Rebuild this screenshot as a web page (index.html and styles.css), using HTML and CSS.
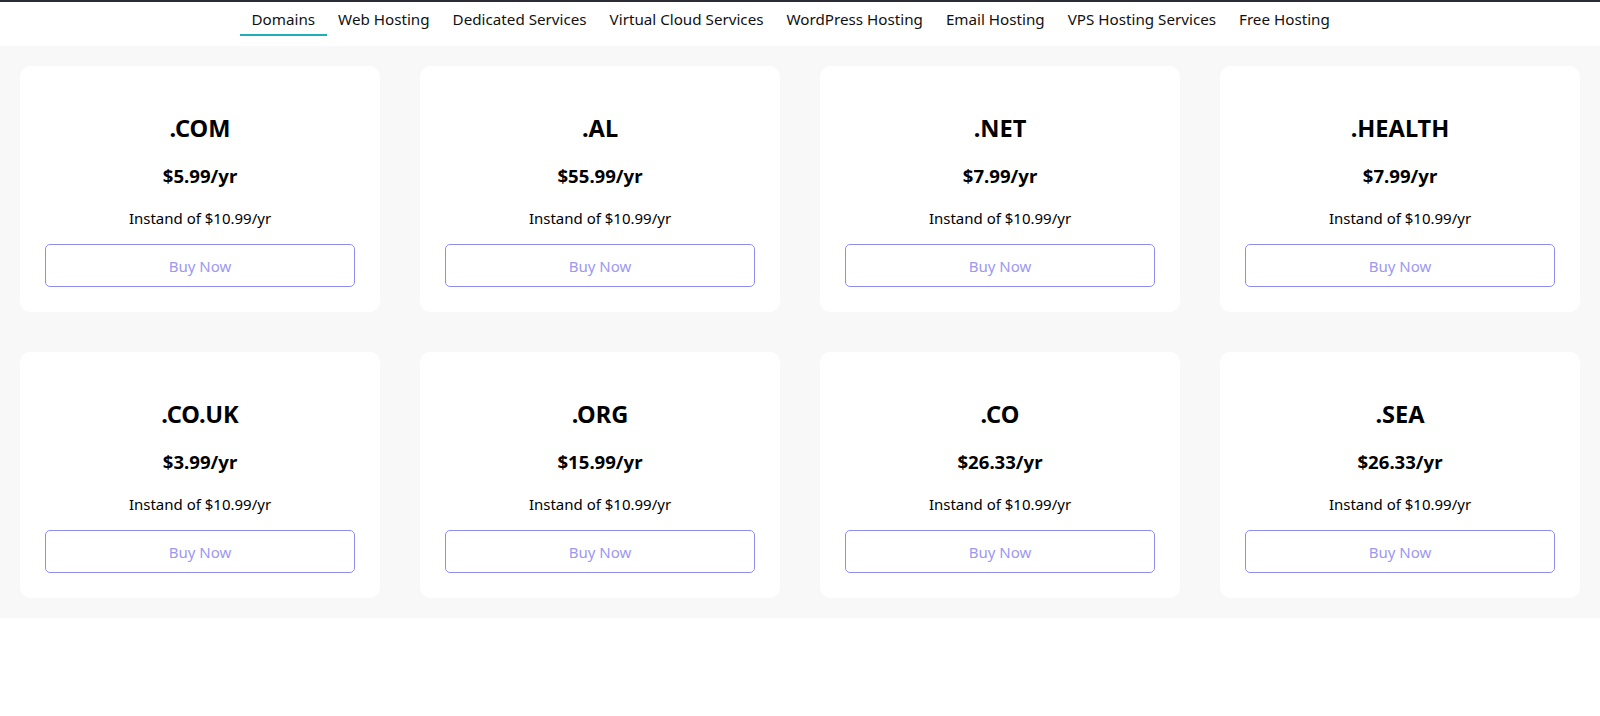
FILE: index.html
```
<!DOCTYPE html>
<html lang="en">
<head>
<meta charset="utf-8">
<title>Domains</title>
<link rel="stylesheet" href="styles.css">
</head>
<body>
<header class="topnav">
  <ul class="tabs">
    <li class="tab active">Domains</li>
    <li class="tab">Web Hosting</li>
    <li class="tab">Dedicated Services</li>
    <li class="tab">Virtual Cloud Services</li>
    <li class="tab">WordPress Hosting</li>
    <li class="tab">Email Hosting</li>
    <li class="tab">VPS Hosting Services</li>
    <li class="tab">Free Hosting</li>
  </ul>
</header>
<main class="grid">
  <div class="card"><h2 class="tld">.COM</h2><p class="price">$5.99/yr</p><p class="old">Instand of $10.99/yr</p><button class="buy">Buy Now</button></div>
  <div class="card"><h2 class="tld">.AL</h2><p class="price">$55.99/yr</p><p class="old">Instand of $10.99/yr</p><button class="buy">Buy Now</button></div>
  <div class="card"><h2 class="tld">.NET</h2><p class="price">$7.99/yr</p><p class="old">Instand of $10.99/yr</p><button class="buy">Buy Now</button></div>
  <div class="card"><h2 class="tld">.HEALTH</h2><p class="price">$7.99/yr</p><p class="old">Instand of $10.99/yr</p><button class="buy">Buy Now</button></div>
  <div class="card"><h2 class="tld">.CO.UK</h2><p class="price">$3.99/yr</p><p class="old">Instand of $10.99/yr</p><button class="buy">Buy Now</button></div>
  <div class="card"><h2 class="tld">.ORG</h2><p class="price">$15.99/yr</p><p class="old">Instand of $10.99/yr</p><button class="buy">Buy Now</button></div>
  <div class="card"><h2 class="tld">.CO</h2><p class="price">$26.33/yr</p><p class="old">Instand of $10.99/yr</p><button class="buy">Buy Now</button></div>
  <div class="card"><h2 class="tld">.SEA</h2><p class="price">$26.33/yr</p><p class="old">Instand of $10.99/yr</p><button class="buy">Buy Now</button></div>
</main>
</body>
</html>
```
FILE: styles.css
```
* { box-sizing: border-box; }
html, body {
  margin: 0;
  padding: 0;
  background: #ffffff;
  font-family: "Noto Sans", "Open Sans", sans-serif;
  color: #000;
}
.topnav {
  border-top: 2px solid #2c2c37;
  background: #fff;
  height: 46px;
}
.tabs {
  list-style: none;
  margin: 0;
  padding: 5px 0 0 240px;
  display: flex;
}
.tab {
  font-size: 15.2px;
  line-height: 24px;
  padding: 0 11.5px 3px;
  border-bottom: 2px solid transparent;
  color: #111;
  white-space: nowrap;
}
.tab.active {
  border-bottom-color: #1fb0b5;
}
.grid {
  background: #f8f8f8;
  padding: 20px;
  display: grid;
  grid-template-columns: repeat(4, 360px);
  gap: 40px;
}
.card {
  background: #fff;
  border-radius: 10px;
  padding: 46px 25px 25px;
  text-align: center;
}
.tld {
  margin: 0;
  font-size: 23.6px;
  line-height: 32px;
  font-weight: 700;
}
.price {
  margin: 20px 0 0;
  font-size: 18.6px;
  line-height: 24px;
  font-weight: 700;
}
.old {
  margin: 20px 0 0;
  font-size: 15px;
  line-height: 20px;
}
.buy {
  display: block;
  width: 100%;
  margin-top: 16px;
  height: 43px;
  background: #fff;
  border: 1px solid #8f8cf2;
  border-radius: 5px;
  color: #9c98f4;
  font-family: inherit;
  font-size: 15px;
  padding: 1px 0 0;
}
```
